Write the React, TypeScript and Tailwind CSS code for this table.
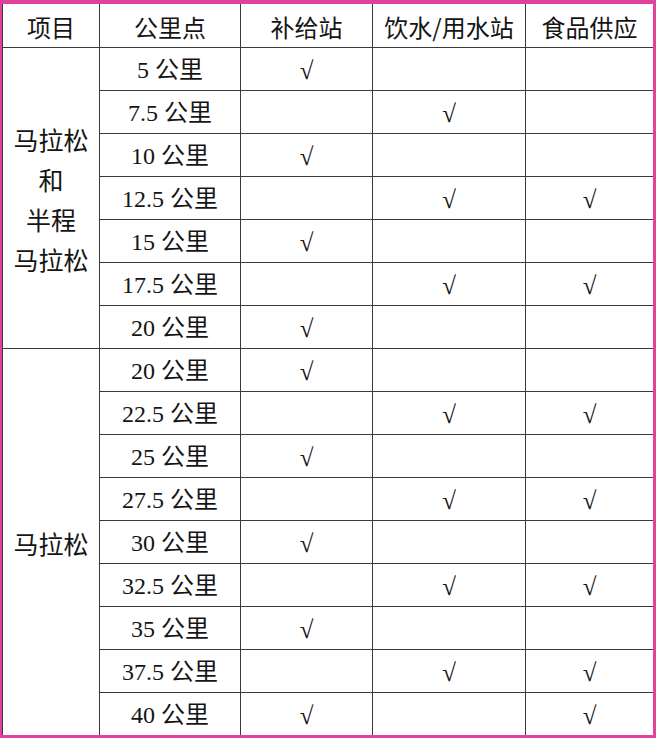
import React from 'react';

type Row = {
  km: string;
  supply?: boolean;
  water?: boolean;
  food?: boolean;
};

const groupA: Row[] = [
  { km: '5', supply: true },
  { km: '7.5', water: true },
  { km: '10', supply: true },
  { km: '12.5', water: true, food: true },
  { km: '15', supply: true },
  { km: '17.5', water: true, food: true },
  { km: '20', supply: true },
];

const groupB: Row[] = [
  { km: '20', supply: true },
  { km: '22.5', water: true, food: true },
  { km: '25', supply: true },
  { km: '27.5', water: true, food: true },
  { km: '30', supply: true },
  { km: '32.5', water: true, food: true },
  { km: '35', supply: true },
  { km: '37.5', water: true, food: true },
  { km: '40', supply: true, food: true },
];

const cjk = "font-['Noto_Sans_CJK_SC',sans-serif]";
const cell = 'border border-[#3a3a3a] text-center align-middle px-0 pb-0 pt-[3px]';

function Check({ on }: { on?: boolean }) {
  return (
    <td className={`${cell} font-['Liberation_Serif','DejaVu_Serif',serif] text-[25px]`}>
      {on ? '√' : ''}
    </td>
  );
}

function DataRow({ row, label }: { row: Row; label?: React.ReactNode }) {
  return (
    <tr className="h-[43px]">
      {label}
      <td className={`${cell} font-['Liberation_Serif','Noto_Sans_CJK_SC',serif] text-[24px]`}>
        {row.km} 公里
      </td>
      <Check on={row.supply} />
      <Check on={row.water} />
      <Check on={row.food} />
    </tr>
  );
}

export default function App() {
  return (
    <div className="w-[656px] h-[738px] bg-white border-[#e3429c] border-t-4 border-l-2 border-r-[3px] border-b-[3px] overflow-hidden">
      <table className="border-collapse table-fixed w-[651px] text-[#151515] leading-none">
        <colgroup>
          <col className="w-[97px]" />
          <col className="w-[141px]" />
          <col className="w-[132px]" />
          <col className="w-[153px]" />
          <col className="w-[128px]" />
        </colgroup>
        <thead>
          <tr className={`h-[43px] ${cjk} text-[24px]`}>
            <th className={`${cell} font-normal border-t-0`}>项目</th>
            <th className={`${cell} font-normal border-t-0`}>公里点</th>
            <th className={`${cell} font-normal border-t-0`}>补给站</th>
            <th className={`${cell} font-normal border-t-0`}>饮水/用水站</th>
            <th className={`${cell} font-normal border-t-0`}>食品供应</th>
          </tr>
        </thead>
        <tbody>
          {groupA.map((row, i) => (
            <DataRow
              key={'a' + i}
              row={row}
              label={
                i === 0 ? (
                  <td rowSpan={groupA.length} className={`${cell} ${cjk} text-[25px] leading-[40px]`}>
                    马拉松<br />和<br />半程<br />马拉松
                  </td>
                ) : undefined
              }
            />
          ))}
          {groupB.map((row, i) => (
            <DataRow
              key={'b' + i}
              row={row}
              label={
                i === 0 ? (
                  <td rowSpan={groupB.length} className={`${cell} ${cjk} text-[25px]`}>
                    马拉松
                  </td>
                ) : undefined
              }
            />
          ))}
        </tbody>
      </table>
    </div>
  );
}
